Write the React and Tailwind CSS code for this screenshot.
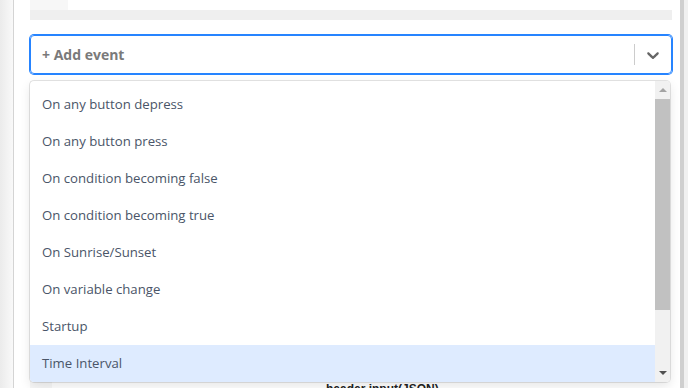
const EVENTS = [
  'On any button depress',
  'On any button press',
  'On condition becoming false',
  'On condition becoming true',
  'On Sunrise/Sunset',
  'On variable change',
  'Startup',
  'Time Interval',
];

const ACTIVE = 'Time Interval';

function Chevron() {
  return (
    <svg width="20" height="20" viewBox="0 0 20 20" fill="#666666">
      <path d="M4.516 7.548c0.436-0.446 1.043-0.481 1.576 0l3.908 3.747 3.908-3.747c0.533-0.481 1.141-0.446 1.574 0 0.436 0.445 0.408 1.197 0 1.615-0.406 0.418-4.695 4.502-4.695 4.502-0.217 0.223-0.502 0.335-0.787 0.335s-0.57-0.112-0.789-0.335c0 0-4.287-4.084-4.695-4.502s-0.436-1.17 0-1.615z" />
    </svg>
  );
}

function FakeScrollbar() {
  return (
    <div className="w-[15px] shrink-0 bg-[#f1f1f1] flex flex-col items-center">
      <div className="h-[18px] flex items-center justify-center">
        <div className="w-0 h-0 border-l-[4px] border-r-[4px] border-b-[4px] border-l-transparent border-r-transparent border-b-[#a3a3a3]" />
      </div>
      <div className="w-full h-[211px] bg-[#c1c1c1]" />
      <div className="flex-1" />
      <div className="h-[18px] flex items-center justify-center">
        <div className="w-0 h-0 border-l-[4px] border-r-[4px] border-t-[4px] border-l-transparent border-r-transparent border-t-[#505050]" />
      </div>
    </div>
  );
}

function EventMenu() {
  return (
    <div className="absolute left-0 top-[46px] w-[640px] h-[301px] bg-white rounded-[4px] shadow-[0_0_0_1px_rgba(0,0,0,0.1),0_4px_11px_rgba(0,0,0,0.1)] overflow-hidden flex z-10">
      <div className="flex-1 pt-[5px] overflow-hidden">
        {EVENTS.map((ev) => (
          <div
            key={ev}
            className={`h-[37px] flex items-center px-[12px] text-[13.2px] text-[#4a5568] ${ev === ACTIVE ? 'bg-[#deebff]' : ''}`}
          >
            {ev}
          </div>
        ))}
      </div>
      <FakeScrollbar />
    </div>
  );
}

export default function App() {
  return (
    <div
      className="w-[688px] h-[388px] overflow-hidden flex bg-white"
      style={{ fontFamily: '"Open Sans", "Liberation Sans", sans-serif' }}
    >
      <div className="w-[13px] shrink-0 bg-gradient-to-r from-[#ebebeb] to-[#f9f9f9] border-r border-[#d4d4d4] box-content" />

      <div className="flex-1 pl-[16px] pr-[8px] flex flex-col">
        <div className="h-[10px] w-[38px] shrink-0 bg-[#f7f7f7]" />
        <div className="h-[10px] w-full shrink-0 bg-[#efefef]" />

        <div className="relative mt-[15px] shrink-0">
          <div className="h-[39px] rounded-[4px] border border-[#2684ff] ring-1 ring-[#2684ff] flex items-center">
            <div className="flex-1 pl-[11px] text-[14px] font-bold text-[#7a7a7a]">+ Add event</div>
            <div className="w-px h-[21px] bg-[#cccccc]" />
            <div className="px-[8px] flex items-center">
              <Chevron />
            </div>
          </div>
          <EventMenu />
        </div>

        <div className="flex mt-[7px] flex-1 min-h-0 overflow-hidden">
          <div className="w-[22px] bg-[#f7f7f7]" />
          <div className="flex-1 pt-[298px] pl-[274px] leading-none">
            <span className="text-[12px] font-bold text-[#222]" style={{ fontFamily: '"Liberation Sans", sans-serif' }}>
              header input(JSON)
            </span>
          </div>
        </div>
      </div>

      <div className="w-[4px] shrink-0 bg-[#cfcfcf]" />
      <div className="w-[4px] shrink-0 bg-[#f0f0f0]" />
    </div>
  );
}
